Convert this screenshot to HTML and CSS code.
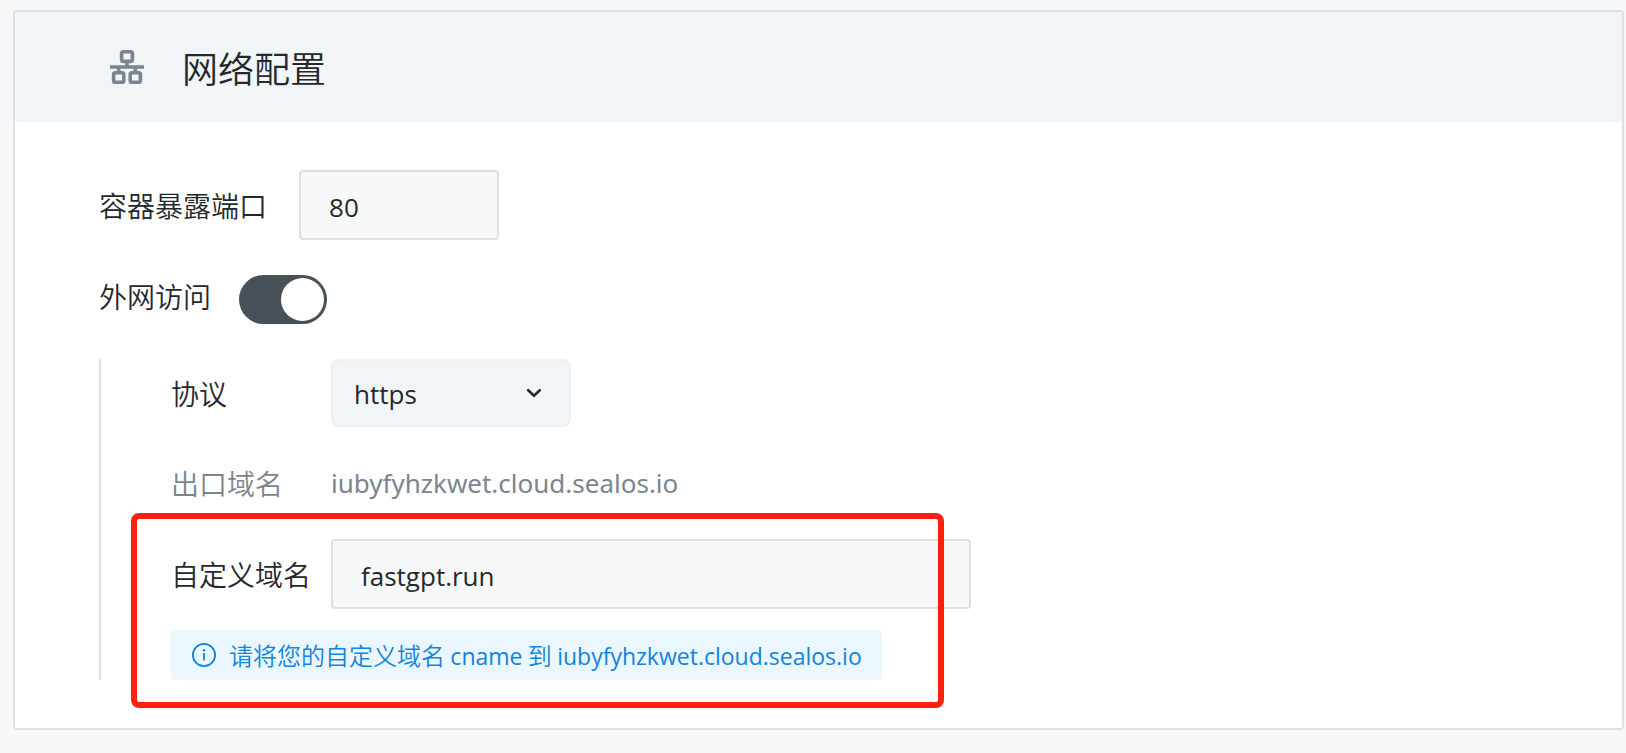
FILE: index.html
```html
<!DOCTYPE html>
<html lang="zh-CN">
<head>
<meta charset="utf-8">
<meta name="viewport" content="width=device-width, initial-scale=1">
<title>网络配置</title>
<link rel="stylesheet" href="styles.css">
</head>
<body>
<main class="card">
  <header class="card-header">
    <svg class="network-icon" viewBox="0 0 34 34" aria-hidden="true">
      <g fill="none" stroke="currentColor" stroke-width="3.6">
        <rect x="11.6" y="1.8" width="10.8" height="9.6" rx="1.8"/>
        <rect x="3.6" y="22.8" width="10.2" height="9.6" rx="1.8"/>
        <rect x="20.2" y="22.8" width="10.2" height="9.6" rx="1.8"/>
        <path d="M17 12v5M0 17h34M8.7 17v5M25.3 17v5"/>
      </g>
    </svg>
    <h1 class="card-title">网络配置</h1>
  </header>
  <div class="card-body">
    <div class="row row-port">
      <label for="port">容器暴露端口</label>
      <input class="text-input port-input" id="port" type="text" inputmode="numeric" value="80">
    </div>
    <div class="row row-switch">
      <label for="public">外网访问</label>
      <input class="switch" id="public" type="checkbox" role="switch" checked>
    </div>
    <section class="access">
      <div class="field">
        <label for="protocol">协议</label>
        <div class="select-wrap">
          <select class="select" id="protocol">
            <option>https</option>
            <option>grpcs</option>
            <option>wss</option>
          </select>
          <svg class="chevron" viewBox="0 0 16 10" aria-hidden="true"><path d="M2.2 2.2 8 7.8l5.8-5.6" fill="none" stroke="currentColor" stroke-width="2.6" stroke-linecap="round"/></svg>
        </div>
      </div>
      <div class="field field-muted">
        <span>出口域名</span>
        <span class="latin">iubyfyhzkwet.cloud.sealos.io</span>
      </div>
      <div class="custom">
        <div class="field">
          <label for="domain">自定义域名</label>
          <input class="text-input" id="domain" type="text" value="fastgpt.run">
        </div>
        <p class="hint">
          <svg class="info-icon" viewBox="0 0 24 24" aria-hidden="true">
            <circle cx="12" cy="12" r="11.1" fill="none" stroke="currentColor" stroke-width="1.8"/>
            <path d="M12 10v7.6" stroke="currentColor" stroke-width="1.8"/>
            <circle cx="12" cy="7.2" r="1.2" fill="currentColor"/>
          </svg>
          <span>请将您的自定义域名 <span class="hint-latin">cname</span> 到 <span class="hint-latin">iubyfyhzkwet.cloud.sealos.io</span></span>
        </p>
        <div class="highlight"></div>
      </div>
    </section>
  </div>
</main>
</body>
</html>
```
FILE: styles.css
```css
* { box-sizing: border-box; }

body {
  margin: 0;
  padding: 10px 2px 22px 13px;
  background: #f6f8fa;
  color: #24282c;
  font: 350 28px/42px "Noto Sans CJK SC", sans-serif;
}

.card {
  background: #fff;
  border: 2px solid #dee0e2;
  border-radius: 4px;
}

.card-header {
  display: flex;
  align-items: center;
  gap: 38px;
  height: 110px;
  padding: 0 95px;
  background: #f1f5f8;
}

.network-icon { width: 34px; height: 34px; color: #7b858f; }

.card-title { margin: 0; font-size: 36px; line-height: 54px; font-weight: inherit; }

.card-body { display: grid; gap: 35px; padding: 48px 84px; }

.row { display: flex; align-items: center; }
.row-port { gap: 32px; }
.row-switch { gap: 28px; align-items: flex-start; }

.text-input {
  width: 640px;
  height: 70px;
  padding: 4px 28px 0;
  background: #f7f8fa;
  border: 2px solid #dee0e2;
  border-radius: 4px;
  color: inherit;
  font: 400 26px/42px "Open Sans", sans-serif;
}
.port-input { width: 200px; }

.switch {
  appearance: none;
  display: flex;
  justify-content: flex-end;
  align-items: center;
  width: 88px;
  height: 49px;
  margin: 0;
  padding: 3px;
  border-radius: 25px;
  background: #485058;
}
.switch::before {
  content: "";
  width: 43px;
  height: 43px;
  border-radius: 50%;
  background: #fff;
}
.switch:not(:checked) { justify-content: flex-start; background: #c4cbd1; }

.access {
  display: grid;
  gap: 35px;
  padding-left: 70px;
  border-left: 2px solid #dee0e2;
}

.field {
  display: grid;
  grid-template-columns: 160px 1fr;
  align-items: center;
}
.field-muted { color: #7b858f; }
.latin { font: 400 26px/42px "Noto Sans", sans-serif; }

.select-wrap { display: grid; align-items: center; width: 240px; }
.select, .chevron { grid-area: 1 / 1; }
.select {
  appearance: none;
  width: 100%;
  height: 68px;
  padding: 2px 21px 0;
  background: #f1f5f8;
  border: 2px solid #edf0f2;
  border-radius: 8px;
  color: inherit;
  font: 400 26px/42px "Open Sans", sans-serif;
}
.chevron {
  justify-self: end;
  width: 16px;
  height: 10px;
  margin-right: 29px;
  pointer-events: none;
}

.custom { position: relative; width: 800px; }

.hint {
  display: flex;
  align-items: center;
  gap: 13px;
  width: fit-content;
  height: 50px;
  margin: 21px 0 0;
  padding: 0 20px 0 21px;
  background: #eaf7ff;
  border-radius: 4px;
  color: #1283de;
  font-size: 24px;
  line-height: 36px;
  white-space: nowrap;
}
.info-icon { width: 24px; height: 24px; }
.hint-latin { font: 400 23px/36px "Open Sans", sans-serif; }

.highlight {
  position: absolute;
  inset: -26px 27px -28px -40px;
  border: 6px solid #ff2010;
  border-radius: 8px;
  pointer-events: none;
}
```
